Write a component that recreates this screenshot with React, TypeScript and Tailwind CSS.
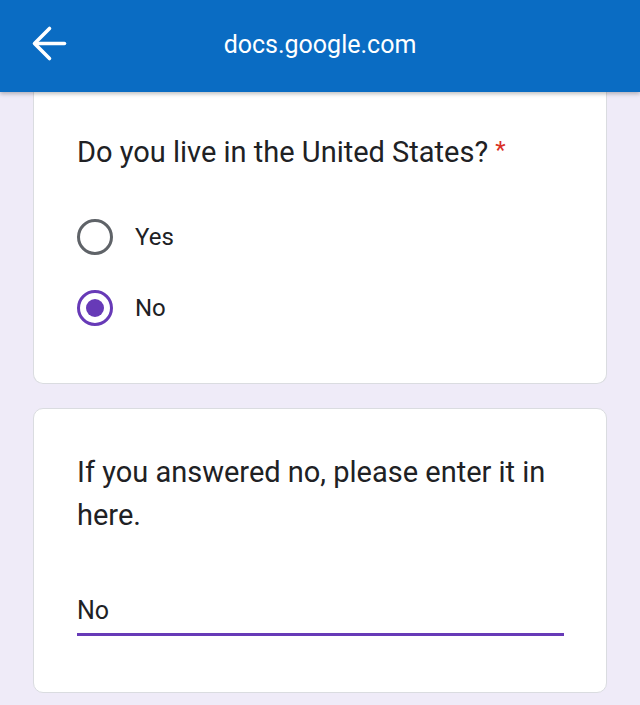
import React, { useState } from "react";

const BackArrow = () => (
  <svg width="45" height="45" viewBox="0 0 24 24" fill="none" stroke="white" strokeWidth="1.9" strokeLinecap="round" strokeLinejoin="round">
    <path d="M20 12H4.5" />
    <path d="M12 4l-8 8 8 8" />
  </svg>
);

const Radio = ({ checked }: { checked: boolean }) =>
  checked ? (
    <span className="flex h-[36px] w-[36px] items-center justify-center rounded-full border-[3px] border-[#673ab7]">
      <span className="h-[18px] w-[18px] rounded-full bg-[#673ab7]" />
    </span>
  ) : (
    <span className="h-[36px] w-[36px] rounded-full border-[3px] border-[#5f6368]" />
  );

const App = () => {
  const [answer, setAnswer] = useState("No");
  const [other, setOther] = useState("No");

  return (
    <div className="min-h-[705px] bg-[#efebf8] font-['Roboto',sans-serif] text-[#202124]">
      <header className="relative z-10 flex h-[92px] items-center bg-[#0a6cc3] shadow-[0_2px_4px_rgba(0,0,0,0.25)]">
        <div className="w-[100px] pb-[6px] pl-[27px]">
          <BackArrow />
        </div>
        <div className="flex-1 pb-[2px] pr-[100px] text-center text-[25px] text-white">docs.google.com</div>
      </header>

      {/* question card, top scrolled under the header */}
      <section className="mx-[33px] rounded-b-[10px] border border-t-0 border-[#dadce0] bg-white px-[43px] pb-[57px] pt-[41px]">
        <h2 className="text-[29px] leading-[39px]">
          Do you live in the United States?{" "}
          <span className="relative top-[-4px] text-[24px] leading-none text-[#d93025]">*</span>
        </h2>
        <div className="mt-[47px] flex flex-col gap-[35px]">
          {["Yes", "No"].map((opt) => (
            <label key={opt} className="flex h-[36px] cursor-pointer items-center gap-[22px]" onClick={() => setAnswer(opt)}>
              <Radio checked={answer === opt} />
              <span className="text-[24px]">{opt}</span>
            </label>
          ))}
        </div>
      </section>

      <section className="mx-[33px] mt-[24px] rounded-[10px] border border-[#dadce0] bg-white px-[43px] pb-[56px] pt-[42px]">
        <h2 className="text-[29px] leading-[43px]">If you answered no, please enter it in here.</h2>
        <div className="mt-[57px] w-[487px] border-b-[3px] border-[#673ab7] pb-[5px]">
          <input
            value={other}
            onChange={(e) => setOther(e.target.value)}
            className="w-full bg-transparent text-[25px] leading-[34px] outline-none"
          />
        </div>
      </section>
    </div>
  );
};

export default App;
